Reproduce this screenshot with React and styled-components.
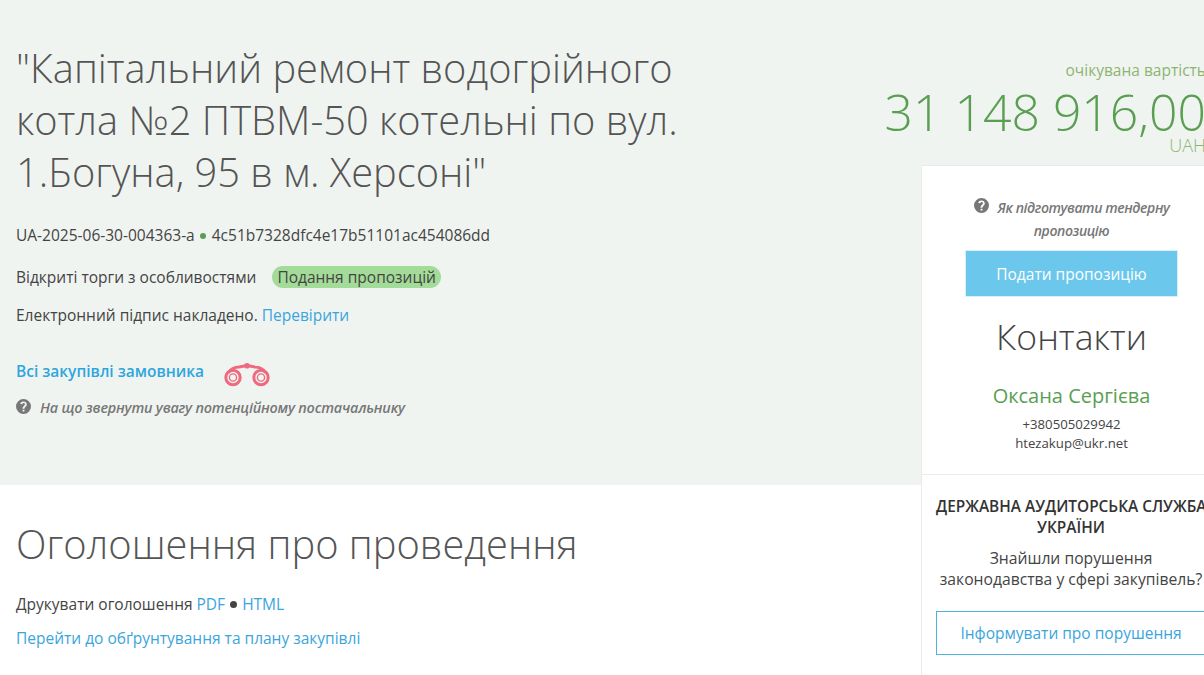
import React from 'react'
import styled, { createGlobalStyle } from 'styled-components'

const Global = createGlobalStyle`
  html, body { margin: 0; padding: 0; background: #fff; overflow: hidden; }
  body { font-family: "Open Sans", "Noto Sans", sans-serif; color: #444; }
  a { color: #3aa5dc; text-decoration: none; }
`
const heroBg = '#f0f4f1'

const Page = styled.div`
  width: 1204px;
  height: 675px;
  overflow: hidden;
  display: flex;
  align-items: flex-start;
`
const MainCol = styled.div`
  width: 921px;
  flex: none;
`
const Hero = styled.section`
  background: ${heroBg};
  height: 485px;
  box-sizing: border-box;
  padding: 42px 0 0 16px;
`
const Title = styled.h1`
  margin: 0 0 26px;
  width: 700px;
  font-size: 39.8px;
  font-weight: 300;
  line-height: 52px;
  color: #555;
`
const Line = styled.p`
  margin: 0 0 ${p => p.$gap || 0}px;
  font-size: 15.5px;
  line-height: 22px;
  color: #444;
  display: flex;
  align-items: center;
`
const Dot = styled.span`
  width: ${p => (p.$dark ? 7 : 6)}px;
  height: ${p => (p.$dark ? 7 : 6)}px;
  border-radius: 50%;
  background: ${p => (p.$dark ? '#444' : '#5a9e52')};
  margin: 1px ${p => (p.$dark ? 5 : 6)}px 0 5px;
`
const Badge = styled.span`
  margin-left: 16px;
  padding: 0 5px;
  background: #a3db98;
  border-radius: 11px;
  line-height: 22px;
`
const LinkGap = styled.a`
  margin-left: 4px;
`
const BuyerRow = styled.div`
  display: flex;
  align-items: center;
  margin: 27px 0 7px;
  height: 36px;
`
const BuyerLink = styled.a`
  font-size: 15.5px;
  font-weight: 600;
  color: #2ea6dd;
`
const Binoculars = styled.svg`
  margin: 8px 0 0 20px;
  width: 46px;
  height: 24px;
`
const Hint = styled.div`
  display: flex;
  justify-content: ${p => (p.$center ? 'center' : 'flex-start')};
  font-size: ${p => (p.$center ? 14 : 14.4)}px;
  line-height: 23px;
  font-weight: 600;
  font-style: italic;
  color: #777;
  letter-spacing: ${p => (p.$center ? -0.4 : -0.2)}px;
  text-align: ${p => (p.$center ? 'center' : 'left')};
`
const HintIcon = styled.svg`
  width: 15px;
  height: 15px;
  flex: none;
  margin: 3px 9px 0 0;
  fill: #777;
`
const Notice = styled.section`
  padding: 30px 0 0 16px;
`
const Heading = styled.h2`
  margin: 0 0 20px;
  font-size: 39.85px;
  font-weight: 300;
  line-height: 58px;
  color: #555;
`
const SideCol = styled.aside`
  width: 300px;
  flex: none;
`
const PriceBox = styled.div`
  background: ${heroBg};
  height: 165px;
  box-sizing: border-box;
  padding-top: 59px;
  width: 285px;
  white-space: nowrap;
  display: flex;
  flex-direction: column;
  align-items: flex-end;
`
const PriceLabel = styled.div`
  font-size: 15.5px;
  line-height: 22px;
  color: #8cb572;
`
const PriceValue = styled.div`
  font-size: 49.9px;
  font-weight: 300;
  line-height: 56px;
  margin-top: 3px;
  color: #5a9e52;
`
const PriceUnit = styled.div`
  font-size: 18px;
  font-weight: 300;
  line-height: 20px;
  margin-top: -5px;
  color: #8cb572;
`
const Sidebar = styled.div`
  background: #fff;
  border-left: 1px solid #ebebeb;
  border-top: 1px solid #ebebeb;
  height: 510px;
`
const SideTop = styled.div`
  padding: 29px 15px 20px;
  height: 309px;
  box-sizing: border-box;
  border-bottom: 1px solid #ebebeb;
  text-align: center;
`
const HintWrap = styled.div`
  padding: 0 30px;
`
const SubmitButton = styled.button`
  display: block;
  width: 213px;
  height: 47px;
  margin: 8px auto 0;
  border: 1px solid #d8f0fa;
  background: #6cc7ec;
  color: #fff;
  font: 400 15.5px "Open Sans", sans-serif;
`
const ContactTitle = styled.h3`
  margin: 14px 0 0;
  font-size: 35.5px;
  font-weight: 300;
  line-height: 50px;
  color: #444;
`
const ContactName = styled.div`
  margin-top: 21px;
  font-size: 20px;
  line-height: 28px;
  color: #5a9e52;
`
const ContactLine = styled.div`
  font-size: 13.2px;
  line-height: 19px;
  color: #444;
  margin-top: ${p => (p.$first ? 5 : 0)}px;
`
const Audit = styled.div`
  padding: 21px 0 0 14px;
  text-align: center;
  width: 270px;
`
const AuditTitle = styled.div`
  font-size: 15.4px;
  font-weight: 600;
  line-height: 21px;
  color: #333;
  white-space: nowrap;
`
const AuditText = styled.div`
  margin-top: 10px;
  font-size: 15.7px;
  line-height: 21px;
  color: #444;
  white-space: nowrap;
`
const ReportButton = styled.button`
  display: block;
  box-sizing: border-box;
  width: 270px;
  height: 44px;
  margin-top: 21px;
  border: 1px solid #4fb3e0;
  background: #fff;
  color: #3aa5dc;
  font: 400 15.5px "Open Sans", sans-serif;
`

const Question = () => (
  <HintIcon viewBox="0 0 24 24">
    <path d="M12 0a12 12 0 1 0 0 24 12 12 0 0 0 0-24zm1.500 20h-3v-3h3v3zm2.600-8.300-1.200 1.100c-.9.800-1.400 1.500-1.400 2.700h-3v-.6c0-1.500.6-2.600 1.500-3.500l1.600-1.500c.4-.4.700-1 .7-1.600 0-1.100-.9-1.900-2-1.900s-2 .8-2.200 1.900l-3-.4C6.500 5.800 9 4 11.900 4c3.100 0 5.300 2 5.300 4.800 0 1.100-.4 2.100-1.100 2.900z" />
  </HintIcon>
)

export default function App() {
  return (
    <Page>
      <Global />
      <MainCol>
        <Hero>
          <Title>"Капітальний ремонт водогрійного котла №2 ПТВМ-50 котельні по вул. 1.Богуна, 95 в м. Херсоні"</Title>
          <Line $gap={20}>
            UA-2025-06-30-004363-a<Dot />4c51b7328dfc4e17b51101ac454086dd
          </Line>
          <Line $gap={16}>
            Відкриті торги з особливостями<Badge>Подання пропозицій</Badge>
          </Line>
          <Line>
            Електронний підпис накладено.<LinkGap href="#">Перевірити</LinkGap>
          </Line>
          <BuyerRow>
            <BuyerLink href="#">Всі закупівлі замовника</BuyerLink>
            <Binoculars viewBox="0 0 46 24" fill="none" stroke="#ee6a80">
              <circle cx="9" cy="14.500" r="7.200" strokeWidth="3" />
              <circle cx="9" cy="14.500" r="3.600" strokeWidth="1.400" />
              <circle cx="37" cy="14.500" r="7.200" strokeWidth="3" />
              <circle cx="37" cy="14.500" r="3.600" strokeWidth="1.400" />
              <path d="M4 10 Q8 4 15 4 L23 2.500 L31 4 Q38 4 42 10" strokeWidth="2.800" strokeLinejoin="round" />
              <circle cx="23" cy="2.800" r="2.800" fill="#ee6a80" stroke="none" />
            </Binoculars>
          </BuyerRow>
          <Hint>
            <Question />
            На що звернути увагу потенційному постачальнику
          </Hint>
        </Hero>
        <Notice>
          <Heading>Оголошення про проведення</Heading>
          <Line $gap={12}>
            Друкувати оголошення<LinkGap href="#">PDF</LinkGap><Dot $dark /><a href="#">HTML</a>
          </Line>
          <Line>
            <a href="#">Перейти до обґрунтування та плану закупівлі</a>
          </Line>
        </Notice>
      </MainCol>
      <SideCol>
        <PriceBox>
          <PriceLabel>очікувана вартість</PriceLabel>
          <PriceValue>31 148 916,00</PriceValue>
          <PriceUnit>UAH</PriceUnit>
        </PriceBox>
        <Sidebar>
          <SideTop>
            <HintWrap>
              <Hint $center>
                <span>
                  <Question />Як підготувати тендерну пропозицію
                </span>
              </Hint>
            </HintWrap>
            <SubmitButton>Подати пропозицію</SubmitButton>
            <ContactTitle>Контакти</ContactTitle>
            <ContactName>Оксана Сергієва</ContactName>
            <ContactLine $first>+380505029942</ContactLine>
            <ContactLine>htezakup@ukr.net</ContactLine>
          </SideTop>
          <Audit>
            <AuditTitle>ДЕРЖАВНА АУДИТОРСЬКА СЛУЖБА<br />УКРАЇНИ</AuditTitle>
            <AuditText>Знайшли порушення<br />законодавства у сфері закупівель?</AuditText>
            <ReportButton>Інформувати про порушення</ReportButton>
          </Audit>
        </Sidebar>
      </SideCol>
    </Page>
  )
}
